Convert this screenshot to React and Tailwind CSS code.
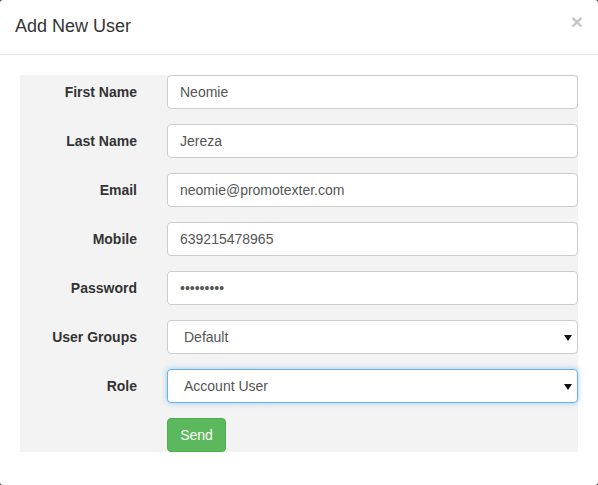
const fields = [
  { label: 'First Name', value: 'Neomie' },
  { label: 'Last Name', value: 'Jereza' },
  { label: 'Email', value: 'neomie@promotexter.com' },
  { label: 'Mobile', value: '639215478965' },
  { label: 'Password', value: '•••••••••' },
];

function Caret() {
  return (
    <svg width="8" height="6" viewBox="0 0 8 6" className="absolute right-[5px] top-[14px]">
      <path d="M0 0 H8 L4 6 Z" fill="#111" />
    </svg>
  );
}

function Row({ label, children }) {
  return (
    <div className="flex items-start">
      <label className="w-[117px] shrink-0 pt-[7px] text-right text-[14px] font-bold leading-[20px] text-[#333]">
        {label}
      </label>
      <div className="ml-[30px] flex-1">{children}</div>
    </div>
  );
}

export default function App() {
  return (
    <div className="h-[485px] w-[598px] bg-[#444]" style={{ fontFamily: '"Liberation Sans", Arial, sans-serif' }}>
      <div className="h-full w-full rounded-[3px] bg-white">
        <div className="flex h-[55px] items-start justify-between border-b border-[#e5e5e5] px-[15px] pt-[14px]">
          <h4 className="text-[18px] leading-[25px] text-[#333]">Add New User</h4>
          <span className="mt-[-5px] text-[21px] font-bold leading-[25px] text-[#c7c7c7]">×</span>
        </div>
        <div className="px-[20px] pt-[20px]">
          <div className="flex flex-col gap-[15px] bg-[#f3f3f3]">
            {fields.map((f) => (
              <Row key={f.label} label={f.label}>
                <div className="flex h-[34px] items-center rounded-[4px] border border-[#ccc] bg-white px-[12px] text-[14px] text-[#555]">
                  {f.value}
                </div>
              </Row>
            ))}
            <Row label="User Groups">
              <div className="relative flex h-[34px] items-center rounded-[4px] border border-[#ccc] bg-white pl-[16px] text-[14px] text-[#555]">
                Default
                <Caret />
              </div>
            </Row>
            <Row label="Role">
              <div className="relative flex h-[34px] items-center rounded-[4px] border border-[#66afe9] bg-white pl-[16px] text-[14px] text-[#555] shadow-[0_0_6px_rgba(102,175,233,0.6)]">
                Account User
                <Caret />
              </div>
            </Row>
            <div className="flex">
              <div className="ml-[147px]">
                <button className="h-[34px] w-[59px] rounded-[4px] border border-[#4cae4c] bg-[#5cb85c] text-[14px] text-white">
                  Send
                </button>
              </div>
            </div>
          </div>
        </div>
      </div>
    </div>
  );
}
